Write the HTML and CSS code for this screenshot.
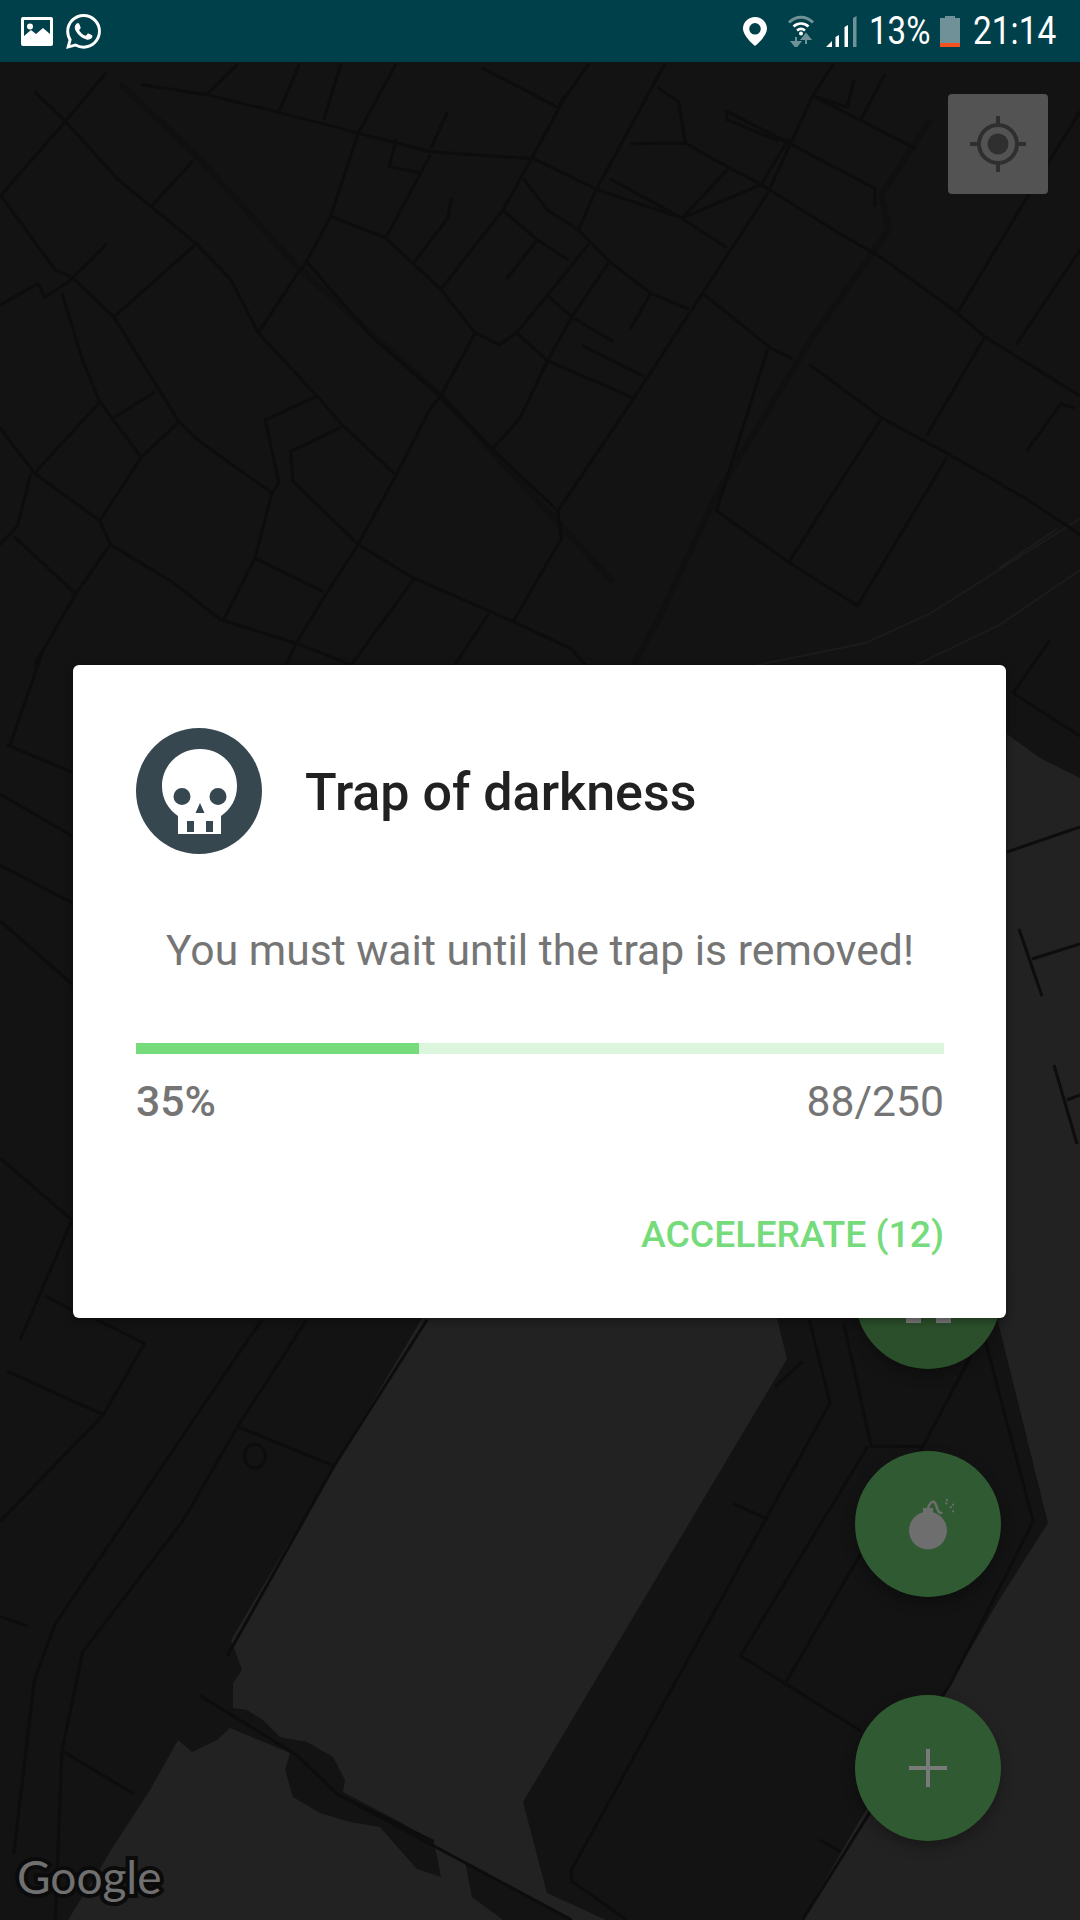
FILE: index.html
```html
<!DOCTYPE html>
<html lang="en">
<head>
    <meta charset="UTF-8">
    <meta name="viewport" content="width=device-width, initial-scale=1.0">
    <title>Trap of darkness</title>
    <link rel="stylesheet" href="styles.css">
</head>
<body>
    <div class="status-bar">
        <svg class="icon-image" viewBox="0 0 32 29">
            <path fill-rule="evenodd" fill="#fff" d="M2 0h28a2 2 0 0 1 2 2v25a2 2 0 0 1-2 2H2a2 2 0 0 1-2-2V2a2 2 0 0 1 2-2zM3 3v16l7-6 5 4 7-6 7 6V3z"/>
            <circle cx="9" cy="9.500" r="3" fill="#fff"/>
        </svg>
        <svg class="icon-whatsapp" viewBox="0 0 24 24">
            <path fill="#fff" d="M17.472 14.382c-.297-.149-1.758-.867-2.03-.967-.273-.099-.471-.148-.67.15-.197.297-.767.966-.94 1.164-.173.199-.347.223-.644.075-.297-.15-1.255-.463-2.39-1.475-.883-.788-1.48-1.761-1.653-2.059-.173-.297-.018-.458.13-.606.134-.133.298-.347.446-.52.149-.174.198-.298.298-.497.099-.198.05-.371-.025-.52-.075-.149-.669-1.612-.916-2.207-.242-.579-.487-.5-.669-.51-.173-.008-.371-.01-.57-.01-.198 0-.52.074-.792.372-.272.297-1.04 1.016-1.04 2.479 0 1.462 1.065 2.875 1.213 3.074.149.198 2.096 3.2 5.077 4.487.709.306 1.262.489 1.694.625.712.227 1.36.195 1.871.118.571-.085 1.758-.719 2.006-1.413.248-.694.248-1.289.173-1.413-.074-.124-.272-.198-.57-.347m-5.421 7.403h-.004a9.87 9.87 0 01-5.031-1.378l-.361-.214-3.741.982.998-3.648-.235-.374a9.86 9.86 0 01-1.51-5.26c.001-5.45 4.436-9.884 9.888-9.884 2.64 0 5.122 1.03 6.988 2.898a9.825 9.825 0 012.893 6.994c-.003 5.45-4.437 9.884-9.885 9.884m8.413-18.297A11.815 11.815 0 0012.05 0C5.495 0 .16 5.335.157 11.892c0 2.096.547 4.142 1.588 5.945L.057 24l6.305-1.654a11.882 11.882 0 005.683 1.448h.005c6.554 0 11.89-5.335 11.893-11.893a11.821 11.821 0 00-3.48-8.413z"/>
        </svg>
        <div class="status-right">
            <svg class="icon-pin" viewBox="0 0 24 29">
                <path fill="#fff" fill-rule="evenodd" d="M12 0C5.400 0 0 5.200 0 11.600 0 19.500 12 29 12 29s12-9.500 12-17.400C24 5.200 18.600 0 12 0zm0 6a5.800 5.800 0 1 1 0 11.600A5.800 5.800 0 0 1 12 6z"/>
            </svg>
            <svg class="icon-wifi" viewBox="0 0 28 32" fill="none">
                <path d="M2 7.500C9 .5 19 .5 26 7.500" stroke="#6f9197" stroke-width="3"/>
                <path d="M6.500 11.500c4.500-4 10.500-4 15 0M10 15.500c2.500-2 5.500-2 8 0" stroke="#fff" stroke-width="2.600"/>
                <circle cx="14" cy="18.500" r="2" fill="#fff"/>
                <path d="M9 22v7M5 27L9 32l4-5zM19 29v-8M15 24L19 19l4 5z" stroke="#6f9197" stroke-width="2" fill="#6f9197"/>
            </svg>
            <svg class="icon-signal" viewBox="0 0 31 31">
                <path fill="#fff" d="M0 31l6-6v6zM9.500 31V21l3.500-2v12zM18.500 31V11l3.500-2v22z"/>
                <path fill="#6f9197" d="M27 31V2l3.500-2v31z"/>
            </svg>
            <span class="status-text percent">13%</span>
            <svg class="icon-battery" viewBox="0 0 20 31">
                <path fill="#6f9197" d="M5 0h10v2h5v25H0V2h5z"/>
                <rect y="27" width="20" height="4" fill="#f4511e"/>
            </svg>
            <span class="status-text clock">21:14</span>
        </div>
    </div>

    <div class="map">
        <svg class="map-bg" viewBox="0 62 1080 1858">
            <!-- water -->
            <path fill="#222" d="M427 1310L231 1640 242 1670 233 1683 233 1708 247 1710 263 1720 280 1737 307 1742 333 1757 345 1780 343 1792 400 1822 434 1842 441 1877 417 1869 393 1842 380 1827 350 1822 320 1813 293 1797 285 1770 290 1753 230 1728 217 1740 192 1752 178 1740 150 1790 113 1847 68 1920H503L472 1897 465 1861 572 1920H606L547 1893 523 1802 787 1359 775 1310z"/>
            <path fill="#222" d="M1007 734L1040 758 1080 778V1920H802L861 1818 947 1689 999 1600 1048 1523 995 1310z"/>

            <!-- upper streets, traced in a 1568 square -->
            <g transform="translate(0 60) scale(.6888 .3954)" fill="none" stroke-linejoin="round">
                <path class="road-wide" d="M175 60L290 250 430 520 640 850 890 1320M1350 150L1280 340 1290 430 1180 700 1040 1100 960 1400 920 1530"/>
                <path class="road-faint" d="M1100 1530L1255 1475 1350 1400 1568 1160M1450 1285L1535 1185M1330 1530L1450 1430 1568 1290"/>
                <path class="road" d="M205 62L300 88 400 130 520 185 625 232 775 250M155 30L95 155 0 345M50 80L95 155 170 300 285 465 335 555 375 690 460 850 495 920 575 1050M0 340L80 530 105 550 165 650 260 915 290 965 395 1095M280 255L220 370M285 465L165 650M155 465L100 560 65 600 55 565 0 620M90 590L120 760 145 865 205 1005M145 865L50 1045 0 930M50 1045L145 1165 160 1225 250 1320 320 1415 430 1475 510 1530M260 915L205 1005 145 1165M225 840L165 905M45 1045L25 1180 0 1225M20 1205L110 1350 50 1530M160 1225L110 1350M460 850L385 910 405 1070 395 1095 370 1260 325 1415M500 925L422 990 425 1065 520 1225 470 1360 430 1475 415 1530M575 1050L520 1225 600 1310 745 1420 830 1490 850 1530M370 1260L470 1345M600 1315L510 1530M710 1400L660 1530M520 185L480 395 445 510 430 545 375 690M480 395L560 450 640 580 690 690 725 720 750 690 795 595 855 465M560 450L625 240M690 690L640 850M445 510L540 700 640 850 715 985 810 1140 815 1210 745 1420M640 850L625 880 575 1050M715 985L755 905 795 760 830 650 885 510M750 690L795 760 920 855M795 595L830 650 890 712M845 722L935 800M920 855L1020 590 1115 335 1180 90 1210 10M810 1140L920 855M640 580L730 380 770 255 820 95 855 10M730 380L780 455 825 505M780 455L735 555M760 300L795 380 840 430 885 510 945 590 1000 630M840 430L865 330 965 10M775 250L870 330 990 400 1055 475M885 300L990 400 1060 270M1020 590L1120 730 1150 755M1175 770L1280 905 1380 1000 1490 1110 1568 1200M1115 730L1040 1140 1145 1270 1245 1380 1375 1005M1145 1270L1280 905M1280 500L1390 640 1430 700 1568 850M1430 700L1345 950M1390 640L1490 350M1475 720L1568 480M1140 205L1270 325 1270 370M1140 205L1055 130 1055 150 1130 205M1105 315L1220 440 1280 500M1180 90L1330 225M1145 200L1105 315 990 400M915 680L945 590M655 350L650 400 600 515M650 130L625 225M575 200L565 270 610 285M520 185L575 10M405 130L435 10M470 150L495 10M300 88L345 10M700 20L810 120 820 90M915 212L995 210 985 105 955 70M1250 150L1285 35M995 210L1040 255 1110 320M1490 990L1540 870 1560 880M1568 130L1490 350M1180 90L1230 120 1240 50"/>
            </g>

            <!-- around the dialog -->
            <path class="road" d="M42 653L10 745M7 745L72 772M0 794L72 836M0 865L72 903M0 921L72 984M0 1158L72 1220 20 1340M45 1296L72 1310M1013 693L1050 640M1013 693L1080 736M1007 852L1080 827M1019 929L1042 996M1032 959L1080 944M1054 1065L1077 1144M1067 1100L1080 1095"/>

            <!-- lower streets, traced in a 1568 square -->
            <g transform="translate(0 1300) scale(.6888 .3954)" fill="none" stroke-linejoin="round">
                <path class="road" d="M445 50L345 320 265 560 120 890 90 1140 80 1568M380 50L290 280 80 820 50 960 20 1400M10 180L150 290M140 50L210 110 150 290 0 560M345 320L485 420M90 1140L195 1250M0 800L40 825M620 50L485 420 330 900M290 1000L430 1150 490 1250 630 1370M490 1250L830 1568M1175 50L1205 260 830 1440 830 1470 910 1568M1225 60L1265 370 1340 370 1410 140M1430 100L1500 560 1380 970 1165 1568M1260 370L1075 900 1250 1090M1340 370L1140 970 1250 1090M1065 515L1115 555M1165 155L1125 220M1190 1365L1220 1395"/>
                <ellipse class="road" cx="370" cy="395" rx="15" ry="30"/>
            </g>
        </svg>

        <button class="locate-btn">
            <svg viewBox="0 0 60 60" width="60" height="60" fill="none" stroke="#2f2f2f">
                <circle cx="30" cy="30" r="19" stroke-width="4"/>
                <circle cx="30" cy="30" r="10.500" fill="#2f2f2f" stroke="none"/>
                <path d="M30 2v10M30 48v10M2 30h10M48 30h10" stroke-width="4"/>
            </svg>
        </button>

        <div class="fab-column">
            <div class="fab fab-hidden">
                <span class="peek"></span>
                <span class="peek"></span>
            </div>
            <div class="fab">
                <svg viewBox="-7 0 52 52" width="52" height="52">
                    <circle cx="19" cy="32.500" r="19" fill="#6e6e6e"/>
                    <rect x="14" y="10" width="10" height="6" fill="#6e6e6e"/>
                    <path d="M19 11c1-6 5-9 7-6s2 7 4 9 3 0 3 0" fill="none" stroke="#6e6e6e" stroke-width="2.500"/>
                    <path d="M38 1l-1 6M45 6l-4 4M45 13l-3 1" fill="none" stroke="#6e6e6e" stroke-width="2" stroke-dasharray="2 1.500"/>
                </svg>
            </div>
            <div class="fab">
                <svg viewBox="0 0 38 38" width="38" height="38">
                    <path d="M19 0v38M0 19h38" stroke="#7a7a7a" stroke-width="4"/>
                </svg>
            </div>
        </div>

        <span class="google">Google</span>

        <div class="dialog">
            <div class="dialog-head">
                <svg class="skull" viewBox="0 0 126 126">
                    <circle cx="63" cy="63" r="63" fill="#37474f"/>
                    <path fill="#fff" fill-rule="evenodd" d="M64 21c-21 0-38 16-38 37 0 13 6 23 16 30v18h43V88c10-7 16-17 16-30 0-21-16-37-37-37zM46 60a8.500 8.500 0 1 1 0 17 8.500 8.500 0 0 1 0-17zm36 0a8.500 8.500 0 1 1 0 17 8.500 8.500 0 0 1 0-17zM64 75l4.500 10h-9zM51 93h7v11h-7zM70 93h7v11h-7z"/>
                </svg>
                <h2 class="dialog-title">Trap of darkness</h2>
            </div>
            <p class="dialog-text">You must wait until the trap is removed!</p>
            <div class="progress">
                <div class="progress-fill" style="width: 35%"></div>
            </div>
            <div class="progress-labels">
                <span class="percent-label">35%</span>
                <span>88/250</span>
            </div>
            <div class="dialog-actions">
                <span class="action">ACCELERATE (12)</span>
            </div>
        </div>
    </div>
</body>
</html>
```

FILE: styles.css
```css
html, body {
    margin: 0;
    padding: 0;
}
body {
    width: 1080px;
    height: 1920px;
    display: flex;
    flex-direction: column;
    overflow: hidden;
    background-color: #131313;
    font-family: Roboto, "Liberation Sans", sans-serif;
}

.status-bar {
    height: 62px;
    flex: none;
    display: flex;
    align-items: center;
    padding-left: 21px;
    background-color: #00404a;
    box-sizing: border-box;
}
.icon-image {
    width: 32px;
    height: 29px;
    margin-right: 13px;
}
.icon-whatsapp {
    width: 35px;
    height: 35px;
}
.status-right {
    margin-left: auto;
    display: flex;
    align-items: center;
}
.icon-pin {
    width: 24px;
    height: 29px;
    margin-top: 1px;
    margin-right: 20px;
}
.icon-wifi {
    width: 28px;
    height: 32px;
    margin-right: 11px;
}
.icon-signal {
    width: 31px;
    height: 31px;
    margin-right: 12px;
}
.icon-battery {
    width: 20px;
    height: 31px;
    margin-right: 13px;
}
.status-text {
    color: #fff;
    font-size: 38px;
    line-height: 62px;
    white-space: nowrap;
    transform-origin: left center;
}
.percent {
    width: 71px;
    transform: scaleX(.87);
}
.clock {
    width: 107px;
    transform: scaleX(.88);
}

.map {
    flex: 1;
    position: relative;
    display: flex;
    justify-content: center;
    align-items: center;
    overflow: hidden;
}
.map-bg {
    position: absolute;
    top: 0;
    left: 0;
    width: 1080px;
    height: 1858px;
}
.road {
    stroke: #0d0d0d;
    stroke-width: 3px;
    vector-effect: non-scaling-stroke;
    fill: none;
}
.road-wide {
    stroke: #101010;
    stroke-width: 6px;
    vector-effect: non-scaling-stroke;
}
.road-faint {
    stroke: #1b1b1b;
    stroke-width: 2px;
    vector-effect: non-scaling-stroke;
}

.locate-btn {
    position: absolute;
    top: 32px;
    right: 32px;
    width: 100px;
    height: 100px;
    padding: 0;
    border: none;
    border-radius: 4px;
    background-color: #535353;
    display: flex;
    align-items: center;
    justify-content: center;
}

.fab-column {
    position: absolute;
    right: 79px;
    bottom: 79px;
    display: flex;
    flex-direction: column;
    gap: 98px;
}
.fab {
    width: 146px;
    height: 146px;
    border-radius: 50%;
    background-color: #2f5a32;
    box-shadow: 0 6px 14px rgba(0, 0, 0, .3);
    display: flex;
    align-items: center;
    justify-content: center;
}
.fab-hidden {
    gap: 15px;
    background-color: #2b4f2b;
    align-items: flex-start;
    padding-top: 92px;
    height: 54px;
    margin-bottom: -16px;
}
.peek {
    width: 15px;
    height: 8px;
    background-color: #7a7a7a;
}

.google {
    position: absolute;
    left: 17px;
    bottom: 18px;
    font-family: Lato, sans-serif;
    font-size: 46px;
    line-height: 50px;
    color: #707070;
    -webkit-text-stroke: 8px #0b0b0b;
    paint-order: stroke fill;
}

.dialog {
    position: relative;
    width: 933px;
    height: 653px;
    margin-right: 1px;
    padding: 63px 62px 0 63px;
    box-sizing: border-box;
    border-radius: 6px;
    background-color: #fff;
    box-shadow: 0 2px 10px rgba(0, 0, 0, .4);
}
.dialog-head {
    display: flex;
    align-items: center;
}
.skull {
    width: 126px;
    height: 126px;
    flex: none;
}
.dialog-title {
    margin: 4px 0 0 43px;
    font-size: 52px;
    font-weight: 500;
    color: #212121;
}
.dialog-text {
    margin: 72px 0 0;
    font-size: 42.67px;
    line-height: 48px;
    text-align: center;
    color: #757575;
}
.progress {
    height: 11px;
    margin-top: 69px;
    background-color: #dcf5dd;
}
.progress-fill {
    height: 100%;
    background-color: #76db7a;
}
.progress-labels {
    display: flex;
    justify-content: space-between;
    margin-top: 23px;
    font-size: 42.67px;
    line-height: 48px;
    color: #757575;
}
.percent-label {
    font-weight: 500;
}
.dialog-actions {
    display: flex;
    justify-content: flex-end;
    margin-top: 85px;
}
.action {
    font-size: 37.33px;
    font-weight: 500;
    line-height: 48px;
    color: #76db7a;
}
```
